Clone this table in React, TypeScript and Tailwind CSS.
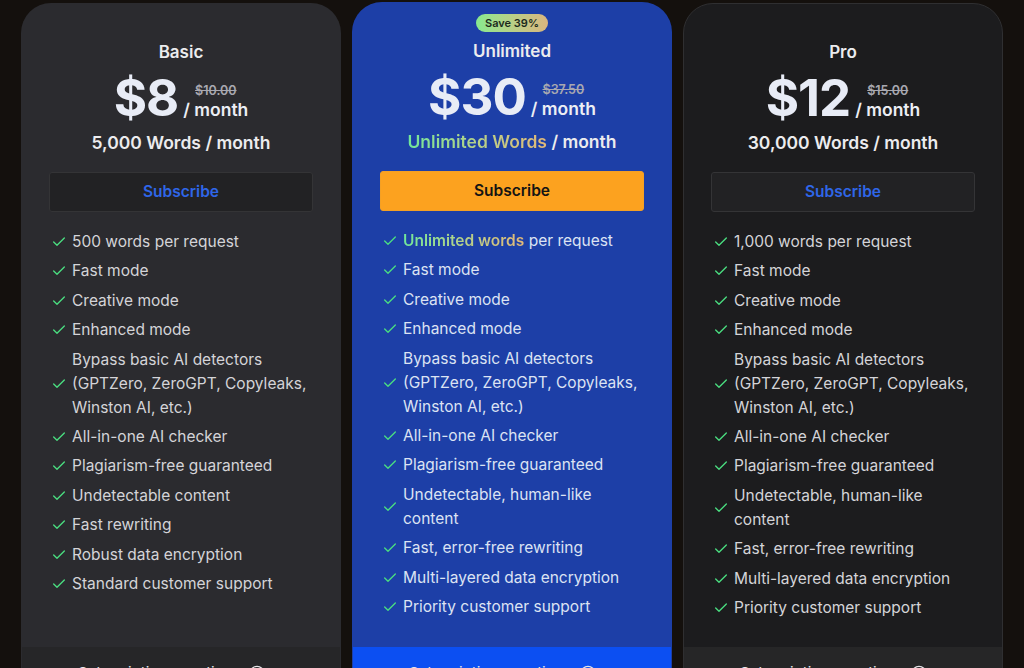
import { Check, CircleHelp } from "lucide-react";

type Plan = {
  name: string;
  price: string;
  oldPrice: string;
  words: string;
  features: string[];
  body: string;
  footer: string;
  border: string;
  text: string;
  featured?: boolean;
};

const plans: Plan[] = [
  {
    name: "Basic",
    price: "$8",
    oldPrice: "$10.00",
    words: "5,000 Words",
    body: "bg-[#2b2b2f]",
    footer: "bg-[#262628]",
    border: "border-transparent",
    text: "text-[#d4d4d8]",
    features: [
      "500 words per request",
      "Fast mode",
      "Creative mode",
      "Enhanced mode",
      "Bypass basic AI detectors (GPTZero, ZeroGPT, Copyleaks, Winston AI, etc.)",
      "All-in-one AI checker",
      "Plagiarism-free guaranteed",
      "Undetectable content",
      "Fast rewriting",
      "Robust data encryption",
      "Standard customer support",
    ],
  },
  {
    name: "Unlimited",
    price: "$30",
    oldPrice: "$37.50",
    words: "Unlimited Words",
    body: "bg-[#1d3fa7]",
    footer: "bg-[#0c4ff2]",
    border: "border-transparent",
    text: "text-[#dce3f3]",
    featured: true,
    features: [
      "Unlimited words per request",
      "Fast mode",
      "Creative mode",
      "Enhanced mode",
      "Bypass basic AI detectors (GPTZero, ZeroGPT, Copyleaks, Winston AI, etc.)",
      "All-in-one AI checker",
      "Plagiarism-free guaranteed",
      "Undetectable, human-like content",
      "Fast, error-free rewriting",
      "Multi-layered data encryption",
      "Priority customer support",
    ],
  },
  {
    name: "Pro",
    price: "$12",
    oldPrice: "$15.00",
    words: "30,000 Words",
    body: "bg-[#1c1c1e]",
    footer: "bg-[#262627]",
    border: "border-[#2f2f31]",
    text: "text-[#d4d4d8]",
    features: [
      "1,000 words per request",
      "Fast mode",
      "Creative mode",
      "Enhanced mode",
      "Bypass basic AI detectors (GPTZero, ZeroGPT, Copyleaks, Winston AI, etc.)",
      "All-in-one AI checker",
      "Plagiarism-free guaranteed",
      "Undetectable, human-like content",
      "Fast, error-free rewriting",
      "Multi-layered data encryption",
      "Priority customer support",
    ],
  },
];

const gradientText =
  "bg-gradient-to-r from-[#6ee79a] to-[#e2b878] bg-clip-text text-transparent";

function PlanCard({ plan }: { plan: Plan }) {
  return (
    <div
      className={`flex w-[320px] flex-col overflow-hidden rounded-[30px] border ${plan.border} ${plan.body} ${
        plan.featured ? "-mt-px" : ""
      }`}
    >
      <div className={`flex flex-col items-center px-[27px] ${plan.featured ? "pt-[11px]" : "pt-[36px]"}`}>
        {plan.featured && (
          <span className="mb-[7px] rounded-full bg-gradient-to-r from-[#86e98f] to-[#d9b57f] px-[9px] py-[2px] text-[11px] leading-[14px] font-semibold text-[#1c2a1c]">
            Save 39%
          </span>
        )}
        <h2 className="text-[17px] leading-[24px] font-semibold text-[#ececee]">{plan.name}</h2>
        <div className="mt-[9px] flex items-end gap-[5px]">
          <span className="text-[51px] leading-[50px] font-bold tracking-[-1px] text-[#e8ecf6]">
            {plan.price}
          </span>
          <div className="flex flex-col items-center pb-[2px]">
            <span className="text-[12.5px] leading-[16px] font-semibold text-[#a8a8b0] line-through">
              {plan.oldPrice}
            </span>
            <span className="text-[17.5px] leading-[22px] font-semibold text-[#eceef4]">/ month</span>
          </div>
        </div>
        <p className="mt-[7px] text-[17.5px] leading-[26px] font-semibold text-[#ececee]">
          {plan.featured ? (
            <span className={gradientText}>{plan.words}</span>
          ) : (
            plan.words
          )}{" "}
          / month
        </p>
        <button
          className={`mt-[16px] h-[40px] w-full rounded-[3px] border text-[15.5px] font-semibold ${
            plan.featured
              ? "border-[#f4a024] bg-[#fca21f] text-[#141414]"
              : "border-[#343436] bg-[#222224] text-[#2f66e8]"
          }`}
        >
          Subscribe
        </button>
      </div>
      <ul className={`flex flex-1 flex-col gap-[5.4px] pt-[18px] pr-[28px] pb-[27px] pl-[29px] ${plan.text}`}>
        {plan.features.map((f, i) => (
          <li key={i} className="flex items-center gap-[5px] text-[15.5px] leading-[24px]">
            <Check className="h-[16px] w-[16px] shrink-0 text-[#4ade80]" strokeWidth={2} />
            <span>
              {plan.featured && i === 0 ? (
                <>
                  <span className={`font-semibold ${gradientText}`}>Unlimited words</span> per request
                </>
              ) : (
                f
              )}
            </span>
          </li>
        ))}
      </ul>
      <div
        className={`flex h-[64px] items-start gap-[8px] pt-[14px] pl-[56px] text-[15px] leading-[24px] text-[#e4e4e7] ${plan.footer}`}
      >
        <span>Subscription questions</span>
        <CircleHelp className="mt-[4px] h-[16px] w-[16px]" />
      </div>
    </div>
  );
}

export default function App() {
  return (
    <div
      className="h-[668px] overflow-hidden bg-[#14100d]"
      style={{ fontFamily: "Inter, 'Noto Sans', sans-serif" }}
    >
      <div className="flex justify-center gap-[11px] pt-[3px]">
        {plans.map((p) => (
          <PlanCard key={p.name} plan={p} />
        ))}
      </div>
    </div>
  );
}
